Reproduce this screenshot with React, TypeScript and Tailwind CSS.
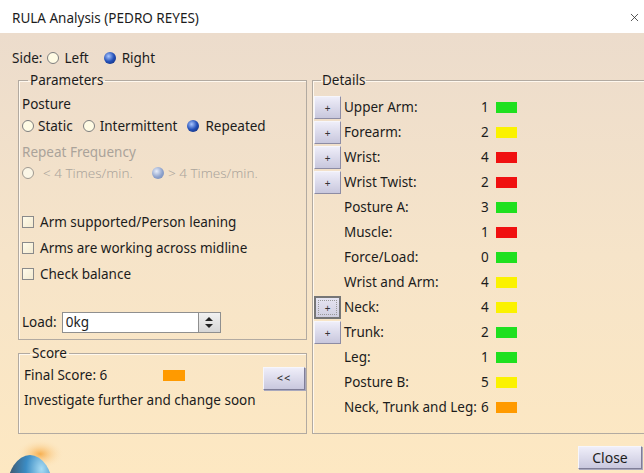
import { X } from "lucide-react";

type Row = { label: string; value: number; color: string; expand?: boolean; focused?: boolean };

const details: Row[] = [
  { label: "Upper Arm:", value: 1, color: "bg-[#1fe01f]", expand: true },
  { label: "Forearm:", value: 2, color: "bg-[#fbf200]", expand: true },
  { label: "Wrist:", value: 4, color: "bg-[#f01010]", expand: true },
  { label: "Wrist Twist:", value: 2, color: "bg-[#f01010]", expand: true },
  { label: "Posture A:", value: 3, color: "bg-[#1fe01f]" },
  { label: "Muscle:", value: 1, color: "bg-[#f01010]" },
  { label: "Force/Load:", value: 0, color: "bg-[#1fe01f]" },
  { label: "Wrist and Arm:", value: 4, color: "bg-[#fbf200]" },
  { label: "Neck:", value: 4, color: "bg-[#fbf200]", expand: true, focused: true },
  { label: "Trunk:", value: 2, color: "bg-[#1fe01f]", expand: true },
  { label: "Leg:", value: 1, color: "bg-[#1fe01f]" },
  { label: "Posture B:", value: 5, color: "bg-[#fbf200]" },
  { label: "Neck, Trunk and Leg:", value: 6, color: "bg-[#ff9a00]" },
];

function Radio({ checked, disabled }: { checked?: boolean; disabled?: boolean }) {
  if (checked) {
    return (
      <span
        className={
          disabled
            ? "inline-block w-[12px] h-[12px] rounded-full bg-[radial-gradient(circle_at_38%_35%,#e8eefa,#8ea2cc_55%,#7186b4)]"
            : "inline-block w-[12px] h-[12px] rounded-full bg-[radial-gradient(circle_at_38%_35%,#a9c6ff,#2450b8_50%,#0d2568)]"
        }
      />
    );
  }
  return (
    <span
      className={
        disabled
          ? "inline-block w-[12px] h-[12px] rounded-full border border-[#9f9990] bg-[#fbf6e6]"
          : "inline-block w-[12px] h-[12px] rounded-full border border-[#7e7e7e] bg-[#fffbe4]"
      }
    />
  );
}

function Check() {
  return <span className="inline-block w-[12px] h-[12px] border border-[#8a8a8a] bg-linear-to-br from-[#fffbea] to-[#f3ead0]" />;
}

function PlusButton({ focused }: { focused?: boolean }) {
  if (focused) {
    return (
      <div className="w-[27px] h-[23px] border-2 border-[#767676] bg-linear-to-b from-[#e6e5f2] to-[#cfcee0] flex items-center justify-center">
        <div className="w-[19px] h-[15px] border border-dotted border-[#9a9a9a] flex items-center justify-center text-[10px] leading-none text-[#333]">+</div>
      </div>
    );
  }
  return (
    <div className="w-[27px] h-[23px] border border-t-[#f6f6fc] border-l-[#f6f6fc] border-b-[#8d8ca4] border-r-[#8d8ca4] bg-linear-to-b from-[#efeef9] to-[#c8c7dd] flex items-center justify-center text-[10px] leading-none text-[#333]">
      +
    </div>
  );
}

function Globe() {
  return (
    <svg width="70" height="39" viewBox="0 0 70 39">
      <defs>
        <radialGradient id="glow" cx="0.5" cy="0.5" r="0.5">
          <stop offset="0%" stopColor="#f6a53a" stopOpacity="0.85" />
          <stop offset="100%" stopColor="#fde8c2" stopOpacity="0" />
        </radialGradient>
        <radialGradient id="ball" cx="0.75" cy="0.2" r="0.85">
          <stop offset="0%" stopColor="#a8dcf4" />
          <stop offset="40%" stopColor="#3b8cc4" />
          <stop offset="100%" stopColor="#41434d" />
        </radialGradient>
      </defs>
      <ellipse cx="40" cy="20" rx="24" ry="15" fill="url(#glow)" />
      <ellipse cx="30" cy="56" rx="23" ry="35" fill="url(#ball)" />
    </svg>
  );
}

export default function App() {
  return (
    <div className="w-[644px] h-[473px] overflow-hidden flex flex-col font-['Noto_Sans',sans-serif] text-[13.5px] text-[#1c1c1c]">
      {/* title bar */}
      <div className="h-[33px] shrink-0 bg-white flex items-center pl-[12px] pr-[3px]">
        <span className="leading-none pt-[4px]">RULA Analysis (PEDRO REYES)</span>
        <X className="ml-auto mt-[2px] text-[#333]" size={13} strokeWidth={1.5} />
      </div>

      <div className="flex-1 flex flex-col bg-linear-to-b from-[#ecdccc] via-[#f6e4c9] to-[#fde8c2]">
        {/* side */}
        <div className="h-[24px] mt-[13px] pl-[12px] flex items-center">
          <span>Side:</span>
          <span className="ml-[5px] flex"><Radio /></span>
          <span className="ml-[5px]">Left</span>
          <span className="ml-[15px] flex"><Radio checked /></span>
          <span className="ml-[6px]">Right</span>
        </div>

        <div className="mt-[2px] pl-[18px] flex gap-[5px]">
          <div className="w-[289px] shrink-0 flex flex-col">
            {/* parameters */}
            <fieldset className="h-[268px] border border-[#b2aaa1] shadow-[inset_1px_1px_0_#fff8ee] px-[3px]">
              <legend className="ml-[6px] px-[2px] leading-[16px]">Parameters</legend>
              <div className="h-[22px] mt-[5px] flex items-center">Posture</div>
              <div className="h-[22px] flex items-center">
                <Radio />
                <span className="ml-[4px]">Static</span>
                <span className="ml-[10px] flex"><Radio /></span>
                <span className="ml-[5px]">Intermittent</span>
                <span className="ml-[10px] flex"><Radio checked /></span>
                <span className="ml-[6px]">Repeated</span>
              </div>
              <div className="h-[20px] mt-[5px] flex items-center text-[#aaa39a]">Repeat Frequency</div>
              <div className="h-[22px] flex items-center text-[#aca59c] font-light">
                <Radio disabled />
                <span className="ml-[9px] w-[104px] whitespace-nowrap">&lt; 4 Times/min.</span>
                <span className="ml-[5px] flex"><Radio checked disabled /></span>
                <span className="ml-[4px] whitespace-nowrap">&gt; 4 Times/min.</span>
              </div>
              <div className="mt-[25px] flex flex-col">
                {["Arm supported/Person leaning", "Arms are working across midline", "Check balance"].map((t) => (
                  <div key={t} className="h-[26px] flex items-center">
                    <Check />
                    <span className="ml-[6px]">{t}</span>
                  </div>
                ))}
              </div>
              <div className="h-[22px] mt-[24px] flex items-center">
                <span>Load:</span>
                <div className="ml-[5px] w-[137px] h-[21px] bg-white border border-[#8f8f8f] flex items-center pl-[3px]">0kg</div>
                <div className="w-[22px] h-[21px] border border-[#8f8f8f] border-l-0 bg-linear-to-b from-[#f2f2f2] to-[#d6d6d6] flex flex-col items-center justify-center gap-[3px]">
                  <span className="w-0 h-0 border-x-[4px] border-x-transparent border-b-[4px] border-b-[#222]" />
                  <span className="w-0 h-0 border-x-[4px] border-x-transparent border-t-[4px] border-t-[#222]" />
                </div>
              </div>
            </fieldset>

            {/* score */}
            <fieldset className="mt-[5px] h-[89px] border border-[#b2aaa1] shadow-[inset_1px_1px_0_#fff8ee] pl-[5px]">
              <legend className="ml-[6px] px-[2px] leading-[16px]">Score</legend>
              <div className="h-[26px] mt-[3px] flex items-start">
                <span className="w-[139px] leading-[22px]">Final Score: 6</span>
                <span className="mt-[6px] w-[22px] h-[11px] bg-[#ff9a00]" />
                <div className="ml-auto mr-[1px] mt-[3px] w-[42px] h-[23px] border border-t-[#f6f6fc] border-l-[#f6f6fc] border-b-[#7f7e98] border-r-[#7f7e98] shadow-[1px_1px_0_#a9a8bd] bg-linear-to-b from-[#efeef9] to-[#c9c8de] flex items-center justify-center text-[11px] text-[#222] tracking-[1px]">
                  &lt;&lt;
                </div>
              </div>
              <div className="h-[22px] -mt-[1px] flex items-center">Investigate further and change soon</div>
            </fieldset>
          </div>

          {/* details */}
          <fieldset className="w-[350px] shrink-0 h-[362px] border border-[#b2aaa1] shadow-[inset_1px_1px_0_#fff8ee] pl-[1px]">
            <legend className="ml-[7px] px-[1px] leading-[16px]">Details</legend>
            <div className="mt-[7px] flex flex-col">
              {details.map((r) => (
                <div key={r.label} className="h-[25px] flex items-center">
                  <div className="w-[27px] flex">{r.expand && <PlusButton focused={r.focused} />}</div>
                  <span className="ml-[3px] w-[137px] whitespace-nowrap">{r.label}</span>
                  <span className="w-[8px]">{r.value}</span>
                  <span className={`ml-[7px] w-[21px] h-[11px] ${r.color}`} />
                </div>
              ))}
            </div>
          </fieldset>
        </div>

        {/* footer */}
        <div className="flex-1 flex items-end">
          <Globe />
          <div className="ml-auto mr-[2px] mb-[4px] w-[64px] h-[23px] border border-t-[#f6f6fc] border-l-[#f6f6fc] border-b-[#7f7e98] border-r-[#7f7e98] shadow-[1px_1px_0_#a9a8bd] bg-linear-to-b from-[#efeef9] to-[#c9c8de] flex items-center justify-center text-[14px]">
            Close
          </div>
        </div>
      </div>
    </div>
  );
}
